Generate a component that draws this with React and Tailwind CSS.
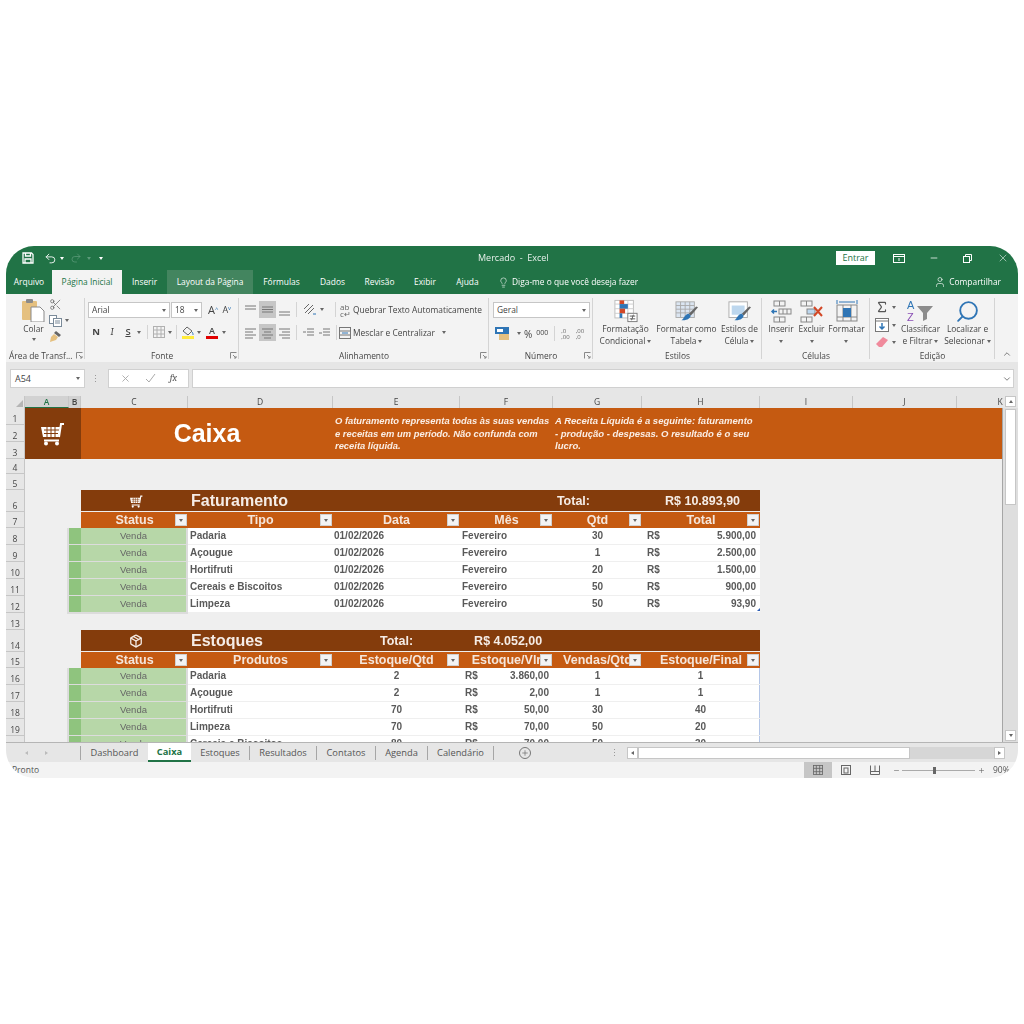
import {
  ChevronDown,
  ChevronUp,
  Lightbulb,
  Minus,
  Package,
  Plus,
  Redo2,
  Scissors,
  Search,
  Sigma,
  Undo2,
  User,
  X,
} from "lucide-react";

const tabs = [
  ["Arquivo", "w-[46px]", "text-white"],
  ["Página Inicial", "w-[70px]", "bg-[#f3f3f3] text-[#217346]"],
  ["Inserir", "w-[45px]", "text-white"],
  ["Layout da Página", "w-[86px]", "bg-[#43855f] text-white"],
  ["Fórmulas", "w-[57px]", "text-white"],
  ["Dados", "w-[45px]", "text-white"],
  ["Revisão", "w-[49px]", "text-white"],
  ["Exibir", "w-[42px]", "text-white"],
  ["Ajuda", "w-[43px]", "text-white"],
];

const rowHeights = [
  [1, 17], [2, 17], [3, 17], [4, 15], [5, 16], [6, 22], [7, 16], [8, 17], [9, 17], [10, 17],
  [11, 17], [12, 17], [13, 17], [14, 22], [15, 16], [16, 17], [17, 17], [18, 17], [19, 17], [20, 17],
];

const columns = [
  ["A", 44, true], ["B", 12, true], ["C", 107], ["D", 145], ["E", 127], ["F", 93],
  ["G", 89], ["H", 118], ["I", 93], ["J", 104], ["K", 87],
];

const sales = [
  ["Padaria", "30", "5.900,00"],
  ["Açougue", "1", "2.500,00"],
  ["Hortifruti", "20", "1.500,00"],
  ["Cereais e Biscoitos", "50", "900,00"],
  ["Limpeza", "50", "93,90"],
];

const stock = [
  ["Padaria", "2", "3.860,00", "1", "1"],
  ["Açougue", "2", "2,00", "1", "1"],
  ["Hortifruti", "70", "50,00", "30", "40"],
  ["Limpeza", "70", "70,00", "50", "20"],
  ["Cereais e Biscoitos", "80", "70,00", "50", "30"],
];

const sheetTabs = [
  ["Dashboard", "w-[68px] border-l"],
  ["Caixa", "w-[43px]"],
  ["Estoques", "w-[58px]"],
  ["Resultados", "w-[67px] border-l"],
  ["Contatos", "w-[59px] border-l"],
  ["Agenda", "w-[52px] border-l"],
  ["Calendário", "w-[66px] border-l"],
];

const tableCols = "grid grid-cols-[107px_145px_127px_93px_89px_118px]";
const rowCols = "grid grid-cols-[12px_107px_145px_127px_93px_89px_118px]";

function Caret({ className = "", tone = "border-t-[#666]" }) {
  return <span className={`inline-block h-0 w-0 border-x-[2.5px] border-t-[3px] border-x-transparent ${tone} ${className}`} />;
}

function CartIcon({ size = 28, color = "#fff" }) {
  return (
    <svg width={size} height={size} viewBox="0 0 28 28" fill="none">
      <path d="M2 7h19l-1.5 10H4z" fill={color} />
      <path d="M5 10h15M5 13.5h14M8 7v10M12 7v10M16 7v10" stroke="#843c0c" strokeWidth="1" />
      <path d="M20 17l2-13h3M5 20.5h15" stroke={color} strokeWidth="2" />
      <circle cx="7" cy="23.5" r="2" fill={color} />
      <circle cx="18" cy="23.5" r="2" fill={color} />
    </svg>
  );
}

function SaveIcon() {
  return (
    <svg width="12" height="12" viewBox="0 0 12 12" fill="none" stroke="#fff" strokeWidth="1.300">
      <path d="M1 1h8.500L11 2.500V11H1z" />
      <path d="M3.500 1v3h5V1M3 11V7h6v4" />
    </svg>
  );
}

function PasteIcon() {
  return (
    <svg width="23" height="24" viewBox="0 0 23 24">
      <rect x="0" y="3" width="15" height="19" rx="1" fill="#e5c07f" />
      <rect x="4" y="1" width="7" height="4" rx="1" fill="#8a8a8a" />
      <path d="M9 9h9l4 4v11H9z" fill="#fff" stroke="#8a8a8a" />
    </svg>
  );
}

function CopyIcon() {
  return (
    <svg width="13" height="13" viewBox="0 0 13 13" fill="none" stroke="#7a8a99">
      <rect x="0.5" y="1.5" width="7" height="8" fill="#fff" />
      <rect x="4.5" y="4.5" width="8" height="8" fill="#fff" />
      <path d="M6 7h5M6 9h5" />
    </svg>
  );
}

function BrushIcon() {
  return (
    <svg width="13" height="13" viewBox="0 0 13 13">
      <path d="M7 1l5 4-2 2-5-4z" fill="#666" />
      <path d="M5 4l4 3-2 3-6 2 1-5z" fill="#e5c07f" />
    </svg>
  );
}

function Lines({ rows, className = "" }) {
  return (
    <svg width="13" height="13" viewBox="0 0 13 13" stroke="#777" className={className}>
      {rows.map(([x1, y, x2]) => (
        <line key={`${x1}-${y}`} x1={x1} y1={y} x2={x2} y2={y} />
      ))}
    </svg>
  );
}

function AlignBox({ active, rows }) {
  return (
    <span className={`flex h-[17px] w-[17px] items-center justify-center ${active ? "bg-[#c6c6c6]" : ""}`}>
      <Lines rows={rows} />
    </span>
  );
}

function Launcher() {
  return (
    <svg width="7" height="7" viewBox="0 0 7 7" fill="none" stroke="#888" className="absolute bottom-[3px] right-[2px]">
      <path d="M0.5 6.5V0.5H6.5M3 3l3 3M4 6h2V4" />
    </svg>
  );
}

function CondIcon() {
  return (
    <svg width="24" height="24" viewBox="0 0 26 25">
      <rect x="1" y="1" width="20" height="19" fill="#fff" stroke="#bbb" />
      <path d="M1 5h20M1 10h20M1 15h20M8 1v19M15 1v19" stroke="#ccc" />
      <rect x="6" y="1" width="5" height="4" fill="#d24726" />
      <rect x="6" y="5" width="9" height="5" fill="#2f75b5" />
      <rect x="6" y="10" width="6" height="5" fill="#d24726" />
      <rect x="6" y="15" width="3" height="5" fill="#2f75b5" />
      <rect x="15" y="15" width="10" height="9" fill="#fff" stroke="#777" />
      <path d="M17 18h6M17 21h6M21 16.5l-2 6" stroke="#555" />
    </svg>
  );
}

function TableStyleIcon({ plain }) {
  return (
    <svg width="24" height="23" viewBox="0 0 26 25">
      <rect x="1" y="2" width="20" height="17" fill={plain ? "#fff" : "#dbe5f1"} stroke="#aaa" />
      {plain ? (
        <rect x="4" y="6" width="14" height="10" fill="#bdd7ee" />
      ) : (
        <path d="M1 6h20M1 10h20M1 14h20M6 2v17M11 2v17M16 2v17" stroke="#a9a9a9" />
      )}
      <path d="M25 8l-8 9-2-2 8-8z" fill="#666" />
      <path d="M15 15l2 2c-1 4-5 5-10 5 3-2 4-7 8-7z" fill="#2f75b5" />
    </svg>
  );
}

function InsertIcon() {
  return (
    <svg width="22" height="23" viewBox="0 0 22 23" fill="none" stroke="#888">
      <rect x="4" y="1" width="11" height="5" />
      <path d="M9.500 1v5" />
      <rect x="9" y="9" width="12" height="5" />
      <path d="M13 9v5M17 9v5" />
      <rect x="4" y="17" width="11" height="5" />
      <path d="M9.500 17v5" />
      <path d="M7 11.500H2M4 9.500l-2 2 2 2" stroke="#2f75b5" strokeWidth="1.500" />
    </svg>
  );
}

function DeleteIcon() {
  return (
    <svg width="24" height="23" viewBox="0 0 24 23" fill="none" stroke="#888">
      <rect x="1" y="1" width="11" height="5" />
      <rect x="7" y="9" width="8" height="5" fill="#bdd7ee" />
      <rect x="1" y="17" width="11" height="5" />
      <path d="M6.500 1v5M6.500 17v5" />
      <path d="M14 7l8 9M22 7l-8 9" stroke="#d24726" strokeWidth="2" />
    </svg>
  );
}

function FormatIcon() {
  return (
    <svg width="22" height="24" viewBox="0 0 22 24" fill="none" stroke="#888">
      <path d="M1 1v4M21 1v4M3 3h16" stroke="#2f75b5" />
      <rect x="1" y="6" width="20" height="16" />
      <path d="M7 6v16M15 6v16M1 18h20" />
      <rect x="7" y="9" width="8" height="9" fill="#2f75b5" stroke="none" />
    </svg>
  );
}

function SortIcon() {
  return (
    <svg width="32" height="24" viewBox="0 0 32 24">
      <text x="2" y="10" fontSize="11" fill="#2f75b5" fontFamily="Liberation Sans">A</text>
      <text x="2" y="22" fontSize="11" fill="#8a4fb5" fontFamily="Liberation Sans">Z</text>
      <path d="M12 7h16l-6 7v6l-4 2v-8z" fill="#8c8c8c" />
    </svg>
  );
}

function GridIcon({ size = 12, stroke = "#666" }) {
  return (
    <svg width={size} height={size} viewBox="0 0 12 12" fill="none" stroke={stroke}>
      <rect x="0.5" y="0.5" width="11" height="11" />
      <path d="M4 0.500v11M8 0.500v11M0.500 4h11M0.500 8h11" />
    </svg>
  );
}

function BigButton({ width, icon, lines, caret }) {
  return (
    <div className={`flex shrink-0 flex-col items-center ${width}`}>
      <div className="flex h-[24px] items-center">{icon}</div>
      <div className="text-center leading-[12px] whitespace-nowrap">
        {lines.map((line, i) => (
          <div key={line} className="flex items-center justify-center gap-[2px]">
            {line}
            {caret && i === lines.length - 1 && <Caret />}
          </div>
        ))}
        {!caret && (
          <div className="flex h-[12px] items-center justify-center">
            <Caret />
          </div>
        )}
      </div>
    </div>
  );
}

function RibbonGroup({ width, label, launcher, children, labelClass = "justify-center" }) {
  return (
    <div className={`relative flex shrink-0 flex-col ${width} after:absolute after:right-0 after:top-[3px] after:bottom-[3px] after:w-px after:bg-[#d4d4d4]`}>
      <div className="h-[56px]">{children}</div>
      <div className={`flex h-[11px] items-center leading-none ${labelClass}`}>{label}</div>
      {launcher && <Launcher />}
    </div>
  );
}

function Ribbon() {
  return (
    <div className="flex h-[68px] shrink-0 bg-[#f3f3f3] pt-[1px] font-['Open_Sans',sans-serif] text-[8.400px] text-[#444]">
      <RibbonGroup width="w-[79px]" label="Área de Transf..." launcher labelClass="pl-[3px]">
        <div className="flex pl-[13px] pt-[3px]">
          <div className="flex w-[29px] flex-col items-center">
            <PasteIcon />
            <span className="mt-[1px] leading-[12px]">Colar</span>
            <Caret className="mt-[3px]" />
          </div>
          <div className="flex flex-col gap-[3px] pl-[1px]">
            <Scissors size={13} strokeWidth={1.200} className="text-[#555]" />
            <div className="flex items-center gap-[3px]">
              <CopyIcon />
              <Caret />
            </div>
            <BrushIcon />
          </div>
        </div>
      </RibbonGroup>

      <RibbonGroup width="w-[154px]" label="Fonte" launcher>
        <div className="flex pl-[3px] pt-[7px]">
          <div className="flex h-[16px] w-[82px] items-center justify-between border border-[#c6c6c6] bg-white px-[3px]">
            Arial
            <Caret />
          </div>
          <div className="ml-[1px] flex h-[16px] w-[31px] items-center justify-between border border-[#c6c6c6] bg-white px-[3px]">
            18
            <Caret />
          </div>
          <span className="ml-[6px] text-[11px] leading-[16px]">A<sup className="text-[6px] text-[#2f75b5]">^</sup></span>
          <span className="ml-[4px] text-[9px] leading-[16px]">A<sup className="text-[6px] text-[#2f75b5]">v</sup></span>
        </div>
        <div className="mt-[7px] flex items-center pl-[3px] text-[9.500px]">
          <b className="w-[16px] text-center">N</b>
          <i className="w-[16px] text-center font-serif">I</i>
          <u className="w-[16px] text-center font-semibold">S</u>
          <Caret className="ml-[1px]" />
          <span className="ml-[6px] h-[14px] w-px bg-[#d4d4d4]" />
          <span className="ml-[5px]"><GridIcon stroke="#b0b0b0" /></span>
          <Caret className="ml-[3px]" />
          <span className="ml-[4px] h-[14px] w-px bg-[#d4d4d4]" />
          <span className="ml-[5px] flex flex-col items-center">
            <svg width="12" height="10" viewBox="0 0 12 10" fill="none" stroke="#666"><path d="M5 1l5 4-4 4-5-4z" /><path d="M10 6c1 1 1 2 1 3" stroke="#2f75b5" /></svg>
            <span className="h-[3px] w-[12px] bg-[#ffeb3b]" />
          </span>
          <Caret className="ml-[3px]" />
          <span className="ml-[5px] flex flex-col items-center text-[9px] font-semibold leading-[10px]">
            A
            <span className="h-[3px] w-[12px] bg-[#e00000]" />
          </span>
          <Caret className="ml-[4px]" />
        </div>
      </RibbonGroup>

      <RibbonGroup width="w-[250px]" label="Alinhamento" launcher>
        <div className="flex items-center pl-[3px] pt-[6px]">
          <AlignBox rows={[[1, 3, 12], [1, 6, 12]]} />
          <AlignBox active rows={[[1, 4, 12], [1, 6.500, 12], [1, 9, 12]]} />
          <AlignBox rows={[[1, 9, 12], [1, 12, 12]]} />
          <span className="ml-[3px] h-[15px] w-px bg-[#d4d4d4]" />
          <svg width="14" height="13" viewBox="0 0 14 13" fill="none" stroke="#666" className="ml-[6px]"><path d="M2 10l8-8M5 11l6-6M1 6l5-5" /><path d="M10 11h3" stroke="#2f75b5" /></svg>
          <Caret className="ml-[3px]" />
          <span className="ml-[11px] h-[15px] w-px bg-[#d4d4d4]" />
          <span className="ml-[4px] w-[13px] text-[8px] leading-[7px] text-[#666]">ab<br />c↵</span>
          <span className="whitespace-nowrap pt-px">Quebrar Texto Automaticamente</span>
        </div>
        <div className="mt-[6px] flex items-center pl-[3px]">
          <AlignBox rows={[[1, 3, 12], [1, 6, 9], [1, 9, 12], [1, 12, 9]]} />
          <AlignBox active rows={[[1, 3, 12], [3, 6, 10], [1, 9, 12], [3, 12, 10]]} />
          <AlignBox rows={[[1, 3, 12], [4, 6, 12], [1, 9, 12], [4, 12, 12]]} />
          <span className="ml-[3px] h-[15px] w-px bg-[#d4d4d4]" />
          <span className="ml-[5px]"><Lines rows={[[5, 3, 12], [5, 6, 12], [5, 9, 12], [1, 6, 4]]} /></span>
          <span className="ml-[3px]"><Lines rows={[[5, 3, 12], [5, 6, 12], [5, 9, 12], [1, 7, 4]]} /></span>
          <span className="ml-[5px] h-[15px] w-px bg-[#d4d4d4]" />
          <svg width="12" height="12" viewBox="0 0 12 12" fill="none" stroke="#777" className="ml-[2px] mr-[2px]"><rect x="0.500" y="0.500" width="11" height="11" /><path d="M0.500 4h11M0.500 8h11" /><path d="M3 6h6" stroke="#2f75b5" /></svg>
          <span className="whitespace-nowrap pt-[2px]">Mesclar e Centralizar</span>
          <Caret className="ml-[7px]" />
        </div>
      </RibbonGroup>

      <RibbonGroup width="w-[104px]" label="Número" launcher>
        <div className="pl-[4px] pr-[3px] pt-[7px]">
          <div className="flex h-[16px] items-center justify-between border border-[#c6c6c6] bg-white px-[3px]">
            Geral
            <Caret />
          </div>
        </div>
        <div className="mt-[8px] flex items-center pl-[6px]">
          <svg width="17" height="13" viewBox="0 0 17 13"><rect x="0" y="0" width="14" height="7" fill="#2f75b5" /><rect x="2" y="2" width="6" height="3" fill="#fff" /><rect x="4" y="7" width="10" height="6" fill="#e5c07f" /></svg>
          <Caret className="ml-[5px]" />
          <span className="ml-[3px] text-[10px] leading-none">%</span>
          <span className="ml-[4px] text-[7px]">000</span>
          <span className="ml-[6px] h-[15px] w-px bg-[#d4d4d4]" />
          <span className="ml-[6px] text-[6px] leading-[6px] text-[#666]">,0<br />,00</span>
          <span className="ml-[6px] text-[6px] leading-[6px] text-[#666]">,00<br />,0</span>
        </div>
      </RibbonGroup>

      <RibbonGroup width="w-[169px]" label="Estilos">
        <div className="flex pl-[3px] pt-[4px]">
          <BigButton width="w-[59px]" icon={<CondIcon />} lines={["Formatação", "Condicional"]} caret />
          <BigButton width="w-[63px]" icon={<TableStyleIcon />} lines={["Formatar como", "Tabela"]} caret />
          <BigButton width="w-[43px]" icon={<TableStyleIcon plain />} lines={["Estilos de", "Célula"]} caret />
        </div>
      </RibbonGroup>

      <RibbonGroup width="w-[108px]" label="Células">
        <div className="flex pl-[4px] pt-[4px]">
          <BigButton width="w-[30px]" icon={<InsertIcon />} lines={["Inserir"]} />
          <BigButton width="w-[31px]" icon={<DeleteIcon />} lines={["Excluir"]} />
          <BigButton width="w-[39px]" icon={<FormatIcon />} lines={["Formatar"]} />
        </div>
      </RibbonGroup>

      <RibbonGroup width="w-[125px]" label="Edição">
        <div className="flex pl-[5px] pt-[4px]">
          <div className="flex w-[23px] flex-col gap-[4px] pt-[1px]">
            <div className="flex items-center gap-[3px]">
              <Sigma size={14} strokeWidth={2} className="text-[#555]" />
              <Caret />
            </div>
            <div className="flex items-center gap-[3px]">
              <svg width="14" height="14" viewBox="0 0 14 14" fill="none" stroke="#777"><rect x="0.500" y="0.500" width="13" height="13" fill="#fff" /><path d="M0.500 3h13" /><path d="M7 5v6M4.500 8.500L7 11l2.500-2.500" stroke="#2f75b5" strokeWidth="1.500" /></svg>
              <Caret />
            </div>
            <div className="flex items-center gap-[3px]">
              <svg width="14" height="12" viewBox="0 0 14 12"><path d="M1 8l7-7 5 3-6 7H4z" fill="#f08a9c" /></svg>
              <Caret />
            </div>
          </div>
          <BigButton width="w-[45px]" icon={<SortIcon />} lines={["Classificar", "e Filtrar"]} caret />
          <BigButton width="w-[49px]" icon={<Search size={25} strokeWidth={1.800} className="-scale-x-100 text-[#2f75b5]" />} lines={["Localizar e", "Selecionar"]} caret />
        </div>
      </RibbonGroup>

      <div className="flex flex-1 items-end justify-center pb-[3px] text-[#666]">
        <ChevronUp size={10} />
      </div>
    </div>
  );
}

function FormulaBar() {
  return (
    <div className="flex h-[34px] shrink-0 bg-[#e6e6e6] pl-[4px] pr-[4px] pt-[7px] font-['Open_Sans',sans-serif] text-[9px] text-[#444]">
      <div className="flex h-[19px] w-[75px] items-center justify-between border border-[#d0d0d0] bg-white pl-[4px] pr-[4px]">
        A54
        <Caret />
      </div>
      <div className="ml-[10px] mr-[10px] flex h-[19px] w-[3px] flex-col justify-center gap-[2px]">
        <span className="h-px w-px bg-[#999]" />
        <span className="h-px w-px bg-[#999]" />
        <span className="h-px w-px bg-[#999]" />
      </div>
      <div className="flex h-[19px] w-[81px] items-center justify-around border border-[#d0d0d0] bg-white px-[4px] text-[#aaa]">
        <X size={11} />
        <svg width="11" height="11" viewBox="0 0 11 11" fill="none" stroke="#aaa"><path d="M1 6l3 3 6-8" /></svg>
        <i className="font-serif text-[10px] text-[#555]">fx</i>
      </div>
      <div className="ml-[3px] flex h-[19px] flex-1 items-center justify-end border border-[#d0d0d0] bg-white pr-[1px] text-[#666]">
        <ChevronDown size={10} />
      </div>
    </div>
  );
}

function ColumnHeader() {
  return (
    <div className="flex h-[12px] shrink-0 overflow-hidden bg-[#e6e6e6] font-['Open_Sans',sans-serif] text-[8.500px] leading-[12px] text-[#444]">
      <div className="flex w-[19px] shrink-0 items-end justify-end border-r border-[#c6c6c6] p-[1px]">
        <span className="h-0 w-0 border-b-[7px] border-l-[7px] border-b-[#b5b5b5] border-l-transparent" />
      </div>
      <div className="flex w-[978px] shrink-0 overflow-hidden">
        {columns.map(([name, width, selected]) => (
          <div
            key={name}
            style={{ width }}
            className={`shrink-0 border-r border-[#c6c6c6] text-center ${selected ? "bg-[#d2d2d2] font-semibold" : ""} ${name === "A" ? "border-b border-b-[#217346] text-[#217346]" : ""}`}
          >
            {name}
          </div>
        ))}
      </div>
      <div className="flex w-[15px] shrink-0 justify-center">
        <span className="flex h-[11px] w-[11px] items-center justify-center border border-[#c6c6c6] bg-white">
          <Caret className="rotate-180" />
        </span>
      </div>
    </div>
  );
}

function FilterButton() {
  return (
    <span className="absolute right-[1px] top-[2px] flex h-[12px] w-[12px] items-center justify-center border border-[#d0d0d0] bg-[#f3f3f3]">
      <Caret />
    </span>
  );
}

function HeaderRow({ labels }) {
  return (
    <div className={`${tableCols} ml-[56px] h-[16px] w-[679px] bg-[#c55a11] text-[12.500px] font-bold leading-[16px] text-[#f4e6dc]`}>
      {labels.map((label) => (
        <div key={label} className="relative flex justify-center overflow-hidden whitespace-nowrap">
          {label}
          <FilterButton />
        </div>
      ))}
    </div>
  );
}

function StatusCells() {
  return (
    <>
      <div className="border-b-2 border-[#dcdcdc] bg-[#8fc47e] shadow-[-2px_0_0_#dcdcdc]" />
      <div className="border-b-2 border-r-2 border-[#dcdcdc] bg-[#b7d7a8] text-center text-[9.500px] font-normal leading-[15px] text-[#666]">
        Venda
      </div>
    </>
  );
}

function BandTitle({ icon, title, children }) {
  return (
    <div className="ml-[56px] mb-[1px] flex h-[21px] w-[679px] items-center bg-[#843c0c] pt-px font-bold text-[#f5ece6]">
      <div className="flex w-[110px] justify-center">{icon}</div>
      <span className="text-[16px] leading-none">{title}</span>
      {children}
    </div>
  );
}

function Sheet() {
  return (
    <div className="flex h-[334px] shrink-0 overflow-hidden">
      <div className="w-[19px] shrink-0 bg-[#e6e6e6] font-['Open_Sans',sans-serif] text-[8.500px] text-[#444]">
        {rowHeights.map(([n, h]) => (
          <div key={n} style={{ height: h }} className="flex items-end justify-center border-b border-r border-[#c6c6c6] pb-[1px] leading-none">
            {n}
          </div>
        ))}
      </div>

      <div className="w-[978px] shrink-0 border-r border-[#a6a6a6] bg-[#efefef] font-['Liberation_Sans',Arial,sans-serif]">
        <div className="flex h-[51px] bg-[#c55a11] text-white">
          <div className="flex w-[56px] items-center justify-center bg-[#843c0c]">
            <CartIcon />
          </div>
          <div className="flex w-[252px] items-center justify-center pt-[1px] text-[25px] font-bold">Caixa</div>
          <p className="ml-[2px] mt-[7px] w-[219px] text-[9.400px] font-bold italic leading-[12.500px] text-[#fbeee5]">
            O faturamento representa todas às suas vendas e receitas em um período. Não confunda com receita líquida.
          </p>
          <p className="ml-[1px] mt-[7px] w-[202px] text-[9.500px] font-bold italic leading-[12.500px] text-[#fbeee5]">
            A Receita Líquida é a seguinte: faturamento - produção - despesas. O resultado é o seu lucro.
          </p>
        </div>

        <div className="h-[31px]" />

        <BandTitle icon={<CartIcon size={15} />} title="Faturamento">
          <span className="ml-[269px] text-[12.500px]">Total:</span>
          <span className="ml-[75px] text-[12.500px]">R$ 10.893,90</span>
        </BandTitle>
        <HeaderRow labels={["Status", "Tipo", "Data", "Mês", "Qtd", "Total"]} />
        <div className="relative ml-[44px] w-[691px] text-[10px] font-bold text-[#595959]">
          {sales.map(([name, qty, value]) => (
            <div key={name} className={`${rowCols} h-[17px]`}>
              <StatusCells />
              <div className="mb-[2px] bg-white pl-[2px] leading-[16px]">{name}</div>
              <div className="mb-[2px] bg-white pl-[1px] leading-[16px]">01/02/2026</div>
              <div className="mb-[2px] bg-white pl-[2px] leading-[16px]">Fevereiro</div>
              <div className="mb-[2px] bg-white text-center leading-[16px]">{qty}</div>
              <div className="mb-[2px] flex justify-between bg-white pl-[5px] pr-[4px] leading-[16px]">
                <span>R$</span>
                <span>{value}</span>
              </div>
            </div>
          ))}
          <span className="absolute bottom-[2px] right-0 h-0 w-0 border-b-[3px] border-l-[3px] border-b-[#2f5fb5] border-l-transparent" />
        </div>

        <div className="h-[17px]" />

        <BandTitle icon={<Package size={14} strokeWidth={2.200} />} title="Estoques">
          <span className="ml-[117px] text-[12.500px]">Total:</span>
          <span className="ml-[61px] text-[12.500px]">R$ 4.052,00</span>
        </BandTitle>
        <HeaderRow labels={["Status", "Produtos", "Estoque/Qtd", "Estoque/Vlr", "Vendas/Qtd", "Estoque/Final"]} />
        <div className="ml-[44px] w-[691px] text-[10px] font-bold text-[#595959]">
          {stock.map(([name, qty, value, sold, left]) => (
            <div key={name} className={`${rowCols} h-[17px]`}>
              <StatusCells />
              <div className="mb-[2px] bg-white pl-[2px] leading-[16px]">{name}</div>
              <div className="mb-[2px] bg-white text-center leading-[16px]">{qty}</div>
              <div className="mb-[2px] flex justify-between bg-white pl-[5px] pr-[4px] leading-[16px]">
                <span>R$</span>
                <span>{value}</span>
              </div>
              <div className="mb-[2px] bg-white text-center leading-[16px]">{sold}</div>
              <div className="mb-[2px] border-r border-[#b4c6e7] bg-white text-center leading-[16px]">{left}</div>
            </div>
          ))}
        </div>
      </div>

      <div className="flex w-[15px] shrink-0 flex-col items-center bg-[#dedede] pb-px">
        <span className="mt-px h-[96px] w-[11px] border border-[#c6c6c6] bg-white" />
        <span className="mt-auto flex h-[11px] w-[11px] items-center justify-center border border-[#c6c6c6] bg-white">
          <Caret />
        </span>
      </div>
    </div>
  );
}

function SheetTabs() {
  return (
    <div className="flex h-[20px] shrink-0 items-center border-t border-[#b5b5b5] bg-[#e6e6e6] font-['Open_Sans',sans-serif] text-[9.300px] text-[#555]">
      <div className="flex w-[74px] items-center gap-[17px] pl-[19px] text-[#bbb]">
        <span className="h-0 w-0 border-y-[2.500px] border-r-[3px] border-y-transparent border-r-[#bbb]" />
        <span className="h-0 w-0 border-y-[2.500px] border-l-[3px] border-y-transparent border-l-[#bbb]" />
      </div>
      {sheetTabs.map(([name, width]) =>
        name === "Caixa" ? (
          <div key={name} className={`${width} flex h-[19px] items-center justify-center border-b-2 border-[#217346] bg-white font-bold text-[#217346]`}>
            {name}
          </div>
        ) : (
          <div key={name} className={`${width} flex h-[14px] items-center justify-center border-[#a6a6a6]`}>
            {name}
          </div>
        )
      )}
      <div className="h-[14px] border-l border-[#a6a6a6]" />
      <span className="ml-[25px] flex h-[12px] w-[12px] items-center justify-center rounded-full border border-[#777] text-[#666]">
        <Plus size={8} strokeWidth={2} />
      </span>
      <div className="ml-[83px] flex flex-col gap-[2px]">
        <span className="h-px w-px bg-[#999]" />
        <span className="h-px w-px bg-[#999]" />
        <span className="h-px w-px bg-[#999]" />
      </div>
      <div className="ml-[12px] flex h-[12px] w-[378px] bg-[#d6d6d6]">
        <span className="flex w-[11px] items-center justify-center border border-[#c6c6c6] bg-white">
          <span className="h-0 w-0 border-y-[2.500px] border-r-[3px] border-y-transparent border-r-[#666]" />
        </span>
        <span className="w-[272px] border border-[#c6c6c6] bg-white" />
        <span className="ml-auto flex w-[11px] items-center justify-center border border-[#c6c6c6] bg-white">
          <span className="h-0 w-0 border-y-[2.500px] border-l-[3px] border-y-transparent border-l-[#666]" />
        </span>
      </div>
    </div>
  );
}

function StatusBar() {
  return (
    <div className="flex h-[16px] shrink-0 items-center bg-[#f3f3f3] font-['Open_Sans',sans-serif] text-[8.500px] text-[#555]">
      <span className="pl-[6px] pt-px">Pronto</span>
      <div className="ml-auto flex h-full w-[28px] items-center justify-center bg-[#c6c6c6]">
        <GridIcon size={10} />
      </div>
      <div className="flex h-full w-[28px] items-center justify-center">
        <svg width="10" height="10" viewBox="0 0 10 10" fill="none" stroke="#666"><rect x="0.500" y="0.500" width="9" height="9" /><rect x="3" y="3" width="4" height="5" /></svg>
      </div>
      <div className="flex h-full w-[29px] items-center justify-center">
        <svg width="10" height="10" viewBox="0 0 10 10" fill="none" stroke="#666"><path d="M0.500 0.500v9h9v-9M0.500 6.500h9M5 0.500v6" /></svg>
      </div>
      <Minus size={7} strokeWidth={2} className="ml-[4px] text-[#666]" />
      <div className="relative ml-[2px] h-px w-[73px] bg-[#aaa]">
        <span className="absolute left-[31px] top-[-3px] h-[7px] w-[3px] bg-[#666]" />
      </div>
      <Plus size={7} strokeWidth={2} className="ml-[3px] text-[#666]" />
      <span className="ml-[8px] w-[25px] text-[8.500px]">90%</span>
    </div>
  );
}

export default function App() {
  return (
    <div className="h-[1024px] w-[1024px] overflow-hidden bg-white px-[6px] pt-[246px]">
      <div className="flex h-[532px] w-[1012px] flex-col overflow-hidden rounded-[28px] blur-[0.35px]">
        <div className="relative flex h-[24px] shrink-0 items-center bg-[#217346] font-['Open_Sans',sans-serif] text-[9px] text-[#e8f1ec]">
          <span className="ml-[16px]"><SaveIcon /></span>
          <Undo2 size={13} strokeWidth={1.800} className="ml-[10px]" />
          <Caret className="ml-[3px]" tone="border-t-white" />
          <Redo2 size={12} strokeWidth={1.500} className="ml-[6px] text-[#5c9a7a]" />
          <Caret className="ml-[5px]" tone="border-t-[#5c9a7a]" />
          <Caret className="ml-[8px]" tone="border-t-white" />
          <span className="absolute left-[472px] whitespace-pre">Mercado  -  Excel</span>
          <div className="ml-auto flex items-center">
            <span className="flex h-[14px] w-[39px] items-center justify-center bg-white text-[#217346]">Entrar</span>
            <svg width="12" height="9" viewBox="0 0 12 9" fill="none" stroke="#fff" className="ml-[18px]"><rect x="0.500" y="0.500" width="11" height="8" /><path d="M0.500 2.500h11M6 4v3" /></svg>
            <Minus size={10} className="ml-[24px]" />
            <svg width="9" height="9" viewBox="0 0 9 9" fill="none" stroke="#fff" className="ml-[24px]"><rect x="0.500" y="2.500" width="6" height="6" /><path d="M2.500 2.500v-2h6v6h-2" /></svg>
            <X size={12} strokeWidth={1.200} className="ml-[25px] mr-[9px]" />
          </div>
        </div>

        <div className="flex h-[24px] shrink-0 bg-[#217346] font-['Open_Sans',sans-serif] text-[8.400px] text-white">
          {tabs.map(([name, width, colors]) => (
            <div key={name} className={`flex items-center justify-center pt-px ${width} ${colors}`}>
              {name}
            </div>
          ))}
          <div className="ml-[9px] flex items-center gap-[3px]">
            <Lightbulb size={11} strokeWidth={1.300} />
            Diga-me o que você deseja fazer
          </div>
          <div className="ml-auto flex items-center gap-[3px] pr-[17px]">
            <User size={12} strokeWidth={1.300} />
            Compartilhar
          </div>
        </div>

        <Ribbon />
        <FormulaBar />
        <ColumnHeader />
        <Sheet />
        <SheetTabs />
        <StatusBar />
      </div>
    </div>
  );
}
